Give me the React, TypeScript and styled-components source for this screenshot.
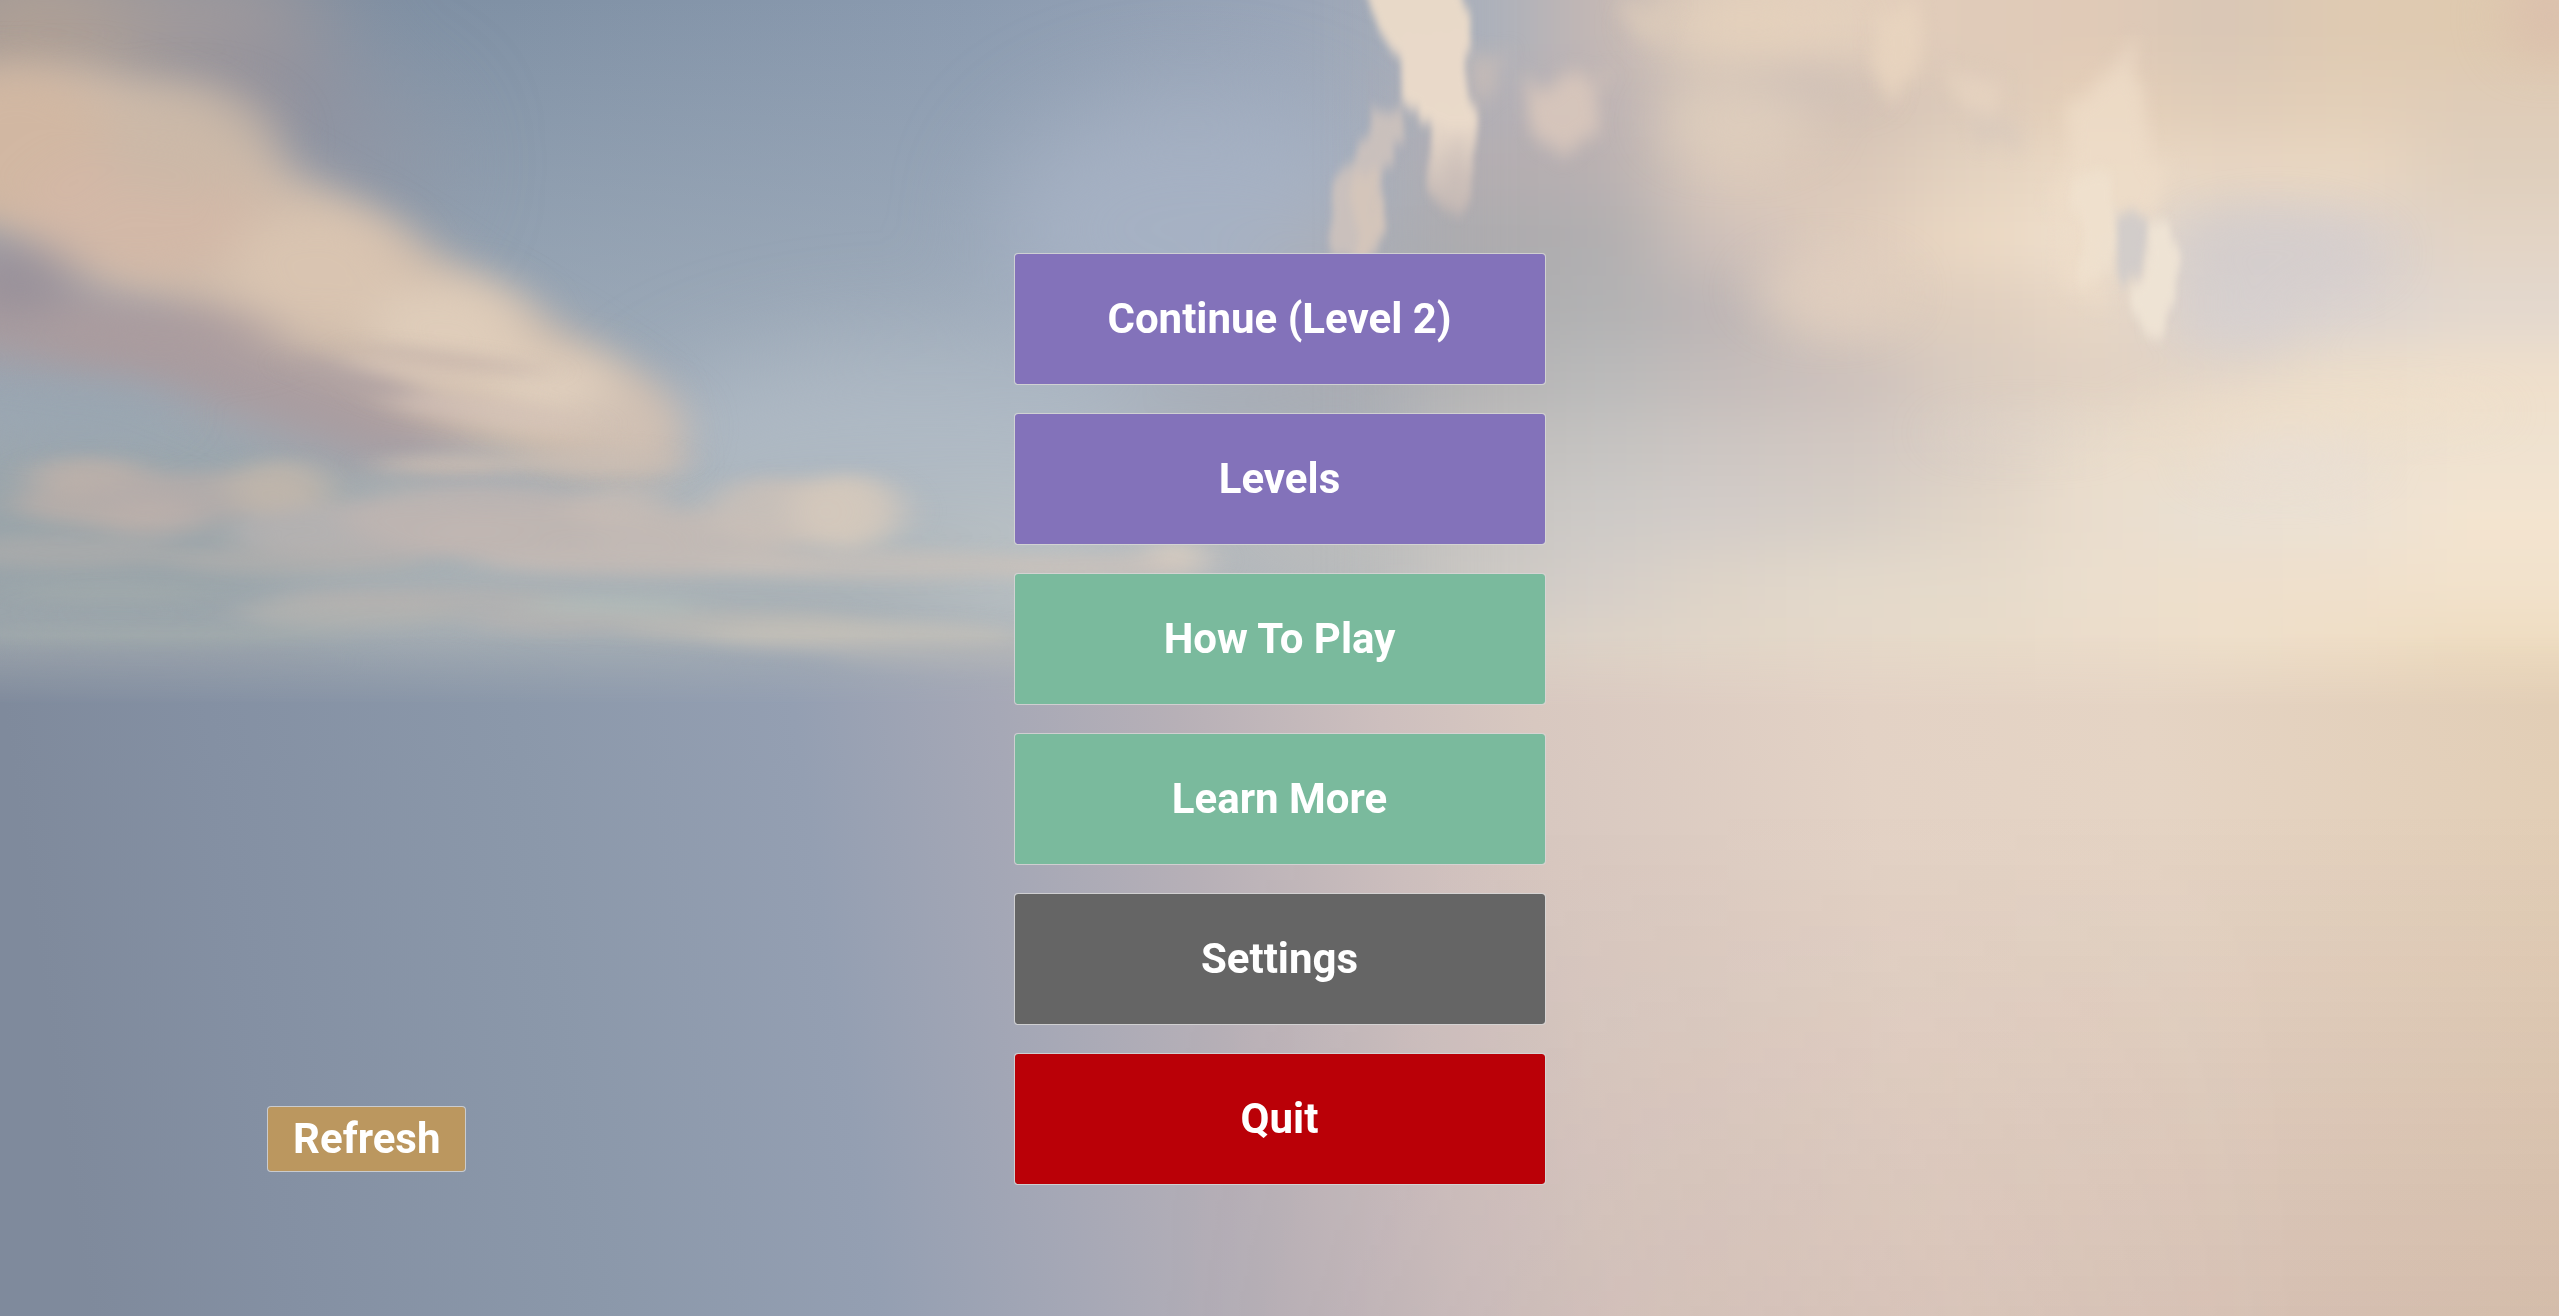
import React from "react";
import styled, { createGlobalStyle } from "styled-components";

const GlobalStyle = createGlobalStyle`
  body {
    margin: 0;
    background: #8f9bae;
  }
`;

const Screen = styled.main`
  position: relative;
  isolation: isolate;
  box-sizing: border-box;
  min-height: 100vh;
  padding-bottom: 131px;
  display: grid;
  grid-template-columns: 1fr 532px 1fr;
  align-items: end;
  overflow: hidden;
`;

const Backdrop = styled.svg`
  position: absolute;
  inset: 0;
  z-index: -1;
  width: 100%;
  height: 100%;
`;

const Corner = styled.div`
  display: flex;
  justify-content: center;
  padding: 0 280px 13px 0;
`;

const Menu = styled.nav`
  display: flex;
  flex-direction: column;
  gap: 28px;
`;

const GameButton = styled.button<{ $color: string }>`
  box-sizing: border-box;
  height: 132px;
  padding: 0 25px;
  border: 1px solid rgba(214, 214, 214, 0.85);
  border-radius: 4px;
  background: ${(p) => p.$color};
  background-clip: padding-box;
  color: #fff;
  font: 700 42px/48px Roboto, sans-serif;
  white-space: nowrap;
  cursor: pointer;
`;

const SmallButton = styled(GameButton)`
  height: 66px;
`;

const items = [
  { label: "Continue (Level 2)", color: "#8372ba" },
  { label: "Levels", color: "#8372ba" },
  { label: "How To Play", color: "#7aba9d" },
  { label: "Learn More", color: "#7aba9d" },
  { label: "Settings", color: "#656565" },
  { label: "Quit", color: "#ba0007" },
];

/* Overcast side of the sky: one colour per cell, blurred into each other. */
const CELL_W = 76;
const CELL_H = 42;
const FIELD_X = 866;
const field = [
  "aab0bb c3b7b4 e0cebc e4d0bd e0cbb9 e0cab7 d9c7b6 dfcab2 dfcab0",
  "b1afb6 bdb3b4 d6c6b8 d3c2b5 dccaba e6d0b9 dfccb8 e3cfb8 dfccb8",
  "b3adb0 b8b0b1 dccabb dac7b8 e4d3c0 eddbc6 e8d6c3 ead7c2 dfcfbd",
  "acabae b0aeb0 d0c1ba dfccbc ebd8c3 efe0ce d5cecb d9d0cd e3d4c5",
  "adadb0 b2b2b3 bdb5b5 ddccbd dfcebe e8d7c5 d5cfce dbd3d0 e3d8ce",
  "b4b3b4 bababa c4bcba ccc0bb daccc0 e1d1c2 e4d6c8 eddeca efdfcb",
  "bfbdbb c5c3c1 cdc6c2 d2c8c2 dbcfc5 eaddcc ecddca ecdfcf efe2d0",
  "c6c3c0 cdcac7 d3ccc8 d6cec6 e1d5c7 eaddcd e9e0d4 ece1d4 f3e4d0",
  "cbc8c4 d5cec8 ded4c8 e3d9cb e5dacb ebdecd eedfcc efe0cc f2e2cc",
  "d6cec5 ded3c7 e2d6c8 e5d8c9 e8dbc9 ebdcca eedfca efdec6 eedcc0",
].map((row) => row.split(" "));

/* cx, cy, rx, ry, colour, opacity */
type Puff = [number, number, number, number, string, number];

const hazePuffs: Puff[] = [
  [730, 140, 120, 80, "#a8b3c5", 0.8],
  [560, 280, 170, 70, "#b3bdc7", 0.7],
  [620, 350, 110, 40, "#c2c7c5", 0.75],
  [70, 330, 220, 60, "#98a4a7", 0.8],
  [380, 350, 220, 45, "#adb4b6", 0.8],
  [30, 20, 90, 60, "#b0a095", 1],
  [130, 15, 70, 45, "#a39b9b", 1],
  [160, 65, 60, 40, "#908f9b", 0.9],
  [220, 100, 50, 45, "#9296a3", 0.7],
  [850, 190, 70, 60, "#adadb1", 0.9],
  [790, 245, 110, 26, "#a9abb0", 0.9],
  [860, 335, 140, 30, "#c3c1bd", 0.9],
];

const softPuffs: Puff[] = [
  [10, 90, 60, 50, "#d2b7a0", 0.8],
  [85, 130, 70, 42, "#d3b8a6", 0.8],
  [115, 85, 55, 35, "#cbb8a6", 0.7],
  [195, 165, 55, 38, "#dbc6b2", 0.85],
  [275, 205, 50, 34, "#dfcdba", 0.95],
  [340, 238, 42, 22, "#e1d0bf", 0.9],
  [385, 262, 32, 24, "#d0c1b5", 0.9],
  [100, 205, 75, 16, "#aa9b9e", 0.8],
  [10, 172, 34, 22, "#968f98", 0.8],
  [45, 253, 60, 12, "#98a5b0", 0.8],
  [1095, 52, 50, 9, "#cbbdb7", 0.8],
  [1065, 75, 45, 26, "#dfcebd", 0.7],
  [1120, 178, 42, 24, "#e1cfbf", 0.7],
  [1070, 15, 60, 16, "#e5d1bc", 0.7],
  [1395, 155, 62, 26, "#d3cdcd", 0.6],
  [1375, 195, 34, 18, "#d7d1d0", 0.6],
  [1400, 282, 50, 14, "#e8dfd5", 0.8],
  [1420, 252, 110, 9, "#efdfcb", 0.7],
  [1240, 265, 50, 8, "#e0d3c8", 0.6],
  [1562, 10, 24, 30, "#dabfac", 0.9],
];

const smallClouds: Puff[] = [
  [55, 292, 38, 12, "#c3b3aa", 0.75],
  [65, 308, 56, 14, "#bcafa9", 0.8],
  [125, 303, 70, 14, "#b5adaa", 0.8],
  [172, 299, 32, 18, "#c2b6ab", 0.8],
  [95, 319, 34, 10, "#bdb1ab", 0.7],
  [230, 325, 90, 18, "#b8b3b1", 0.8],
  [290, 318, 80, 22, "#beb5b2", 0.85],
  [345, 328, 90, 18, "#c0b6b2", 0.85],
  [380, 310, 30, 12, "#cbbeb5", 0.7],
  [420, 330, 60, 18, "#c3bab5", 0.8],
  [475, 314, 42, 22, "#cac0b7", 0.85],
  [518, 313, 34, 23, "#d4c8bc", 0.95],
  [400, 344, 110, 9, "#c3bab5", 0.8],
  [540, 346, 110, 9, "#c8c0ba", 0.75],
  [40, 338, 70, 10, "#b1aeab", 0.6],
  [180, 343, 80, 9, "#b5b0ad", 0.6],
  [70, 363, 60, 6, "#a4abab", 0.6],
  [215, 375, 70, 10, "#b5b3af", 0.7],
  [260, 366, 90, 6, "#b9b3af", 0.6],
  [340, 379, 56, 9, "#b8b4b0", 0.7],
  [375, 371, 55, 6, "#b4beb9", 0.7],
  [100, 389, 120, 5, "#a5adab", 0.6],
  [460, 384, 80, 10, "#bbb9b4", 0.8],
  [530, 390, 100, 10, "#c3bfb9", 0.85],
  [590, 402, 80, 10, "#b6b8b6", 0.7],
  [90, 405, 110, 5, "#9ea4ab", 0.6],
  [720, 343, 18, 12, "#dccfc1", 0.9],
  [670, 348, 60, 9, "#c9c0ba", 0.8],
  [240, 297, 22, 9, "#aeb2b2", 0.5],
];

function Puffs({ list, filter }: { list: Puff[]; filter: string }) {
  return (
    <g filter={filter}>
      {list.map(([cx, cy, rx, ry, fill, opacity], i) => (
        <ellipse key={i} cx={cx} cy={cy} rx={rx} ry={ry} fill={fill} opacity={opacity} />
      ))}
    </g>
  );
}

/* Edge cells are stretched outwards so the blur never reaches bare canvas. */
function CloudField() {
  return (
    <g filter="url(#field)">
      {field.map((row, r) =>
        row.map((hex, c) => {
          const first = r === 0;
          const last = r === field.length - 1;
          const y = first ? -80 : r * CELL_H;
          const bottom = (r + 1) * CELL_H + (last ? 60 : 1);
          const right = c === row.length - 1 ? 80 : 1;
          return (
            <rect
              key={`${r}-${c}`}
              x={FIELD_X + c * CELL_W}
              y={y}
              width={CELL_W + right}
              height={bottom - y}
              fill={`#${hex}`}
            />
          );
        })
      )}
    </g>
  );
}

function Sky() {
  const area = { filterUnits: "userSpaceOnUse" as const, x: -150, y: -150, width: 1868, height: 1106 };
  return (
    <Backdrop viewBox="0 0 1568 806" preserveAspectRatio="none" aria-hidden="true" colorInterpolationFilters="sRGB">
      <defs>
        <linearGradient id="air" gradientUnits="userSpaceOnUse" x1="0" y1="0" x2="1568" y2="0">
          <stop offset="0" stopColor="#7e8c9e" />
          <stop offset="0.2" stopColor="#8091a5" />
          <stop offset="0.38" stopColor="#8b9bb0" />
          <stop offset="0.5" stopColor="#99a5b8" />
          <stop offset="0.58" stopColor="#aaaeb8" />
          <stop offset="0.72" stopColor="#dbc8b7" />
          <stop offset="1" stopColor="#dfcab3" />
        </linearGradient>
        <linearGradient id="airDown" x1="0" y1="0" x2="0" y2="1">
          <stop offset="0" stopColor="#b3bdc8" stopOpacity="0" />
          <stop offset="0.6" stopColor="#b0bac3" stopOpacity="0.65" />
          <stop offset="1" stopColor="#bcbdba" stopOpacity="0.5" />
        </linearGradient>
        <linearGradient id="ground" gradientUnits="userSpaceOnUse" x1="0" y1="420" x2="1530" y2="200">
          <stop offset="0" stopColor="#7f8a9c" />
          <stop offset="0.08" stopColor="#8490a3" />
          <stop offset="0.2" stopColor="#8b98aa" />
          <stop offset="0.31" stopColor="#949fb2" />
          <stop offset="0.39" stopColor="#a6a8b6" />
          <stop offset="0.46" stopColor="#b7b0b7" />
          <stop offset="0.54" stopColor="#cdbfbe" />
          <stop offset="0.6" stopColor="#d8c8c0" />
          <stop offset="0.73" stopColor="#e3d2c5" />
          <stop offset="0.84" stopColor="#e5d4c4" />
          <stop offset="1" stopColor="#e2ceb6" />
        </linearGradient>
        <linearGradient id="dusk" x1="0" y1="0" x2="0" y2="1">
          <stop offset="0.2" stopColor="#74404a" stopOpacity="0" />
          <stop offset="1" stopColor="#74404a" stopOpacity="0.13" />
        </linearGradient>
        <linearGradient id="duskSide" x1="0" y1="0" x2="1" y2="0">
          <stop offset="0.45" stopColor="#000" />
          <stop offset="0.9" stopColor="#fff" />
        </linearGradient>
        <linearGradient id="horizonFade" x1="0" y1="0" x2="0" y2="1">
          <stop offset="0" stopColor="#000" />
          <stop offset="0.1" stopColor="#fff" />
        </linearGradient>
        <linearGradient id="column" x1="0" y1="0" x2="0" y2="1">
          <stop offset="0" stopColor="#e8d9c8" />
          <stop offset="0.65" stopColor="#eadaca" />
          <stop offset="1" stopColor="#cbbbb4" stopOpacity="0.6" />
        </linearGradient>
        <mask id="groundMask">
          <rect y="390" width="1568" height="416" fill="url(#horizonFade)" />
        </mask>
        <mask id="duskMask">
          <rect width="1568" height="806" fill="url(#duskSide)" />
        </mask>
        <filter id="haze" {...area}>
          <feGaussianBlur stdDeviation="30" />
        </filter>
        <filter id="field" {...area}>
          <feGaussianBlur stdDeviation="26 16" />
        </filter>
        <filter id="soft" {...area}>
          <feGaussianBlur stdDeviation="16 12" />
        </filter>
        <filter id="edge" {...area}>
          <feGaussianBlur stdDeviation="13" />
        </filter>
        <filter id="small" {...area}>
          <feGaussianBlur stdDeviation="12 5" />
        </filter>
        <filter id="wisp" filterUnits="userSpaceOnUse" x="700" y="-60" width="800" height="400">
          <feTurbulence type="fractalNoise" baseFrequency="0.07 0.03" numOctaves="3" seed="7" result="n" />
          <feDisplacementMap in="SourceGraphic" in2="n" scale="22" xChannelSelector="R" yChannelSelector="G" />
          <feGaussianBlur stdDeviation="2 4" />
        </filter>
        <filter id="faintWisp" filterUnits="userSpaceOnUse" x="700" y="-60" width="800" height="400">
          <feTurbulence type="fractalNoise" baseFrequency="0.05 0.03" numOctaves="3" seed="3" result="n" />
          <feDisplacementMap in="SourceGraphic" in2="n" scale="30" xChannelSelector="R" yChannelSelector="G" />
          <feGaussianBlur stdDeviation="5 6" />
        </filter>
      </defs>

      <rect width="1568" height="806" fill="url(#air)" />
      <rect width="1568" height="430" fill="url(#airDown)" />
      <Puffs list={hazePuffs} filter="url(#haze)" />
      <CloudField />

      <g filter="url(#edge)">
        <path d="M-40 150 L0 155 L90 190 L190 205 L300 230 L330 275 L230 284 L150 258 L80 230 L-40 214Z" fill="#aa9da0" />
        <path d="M-40 46 L60 42 L125 62 L178 102 L235 134 L295 172 L352 206 L404 240 L416 290 L345 291 L290 272 L215 230 L150 205 L70 174 L0 134 L-40 125Z" fill="#cebbab" />
      </g>
      <Puffs list={softPuffs} filter="url(#soft)" />
      <g filter="url(#small)">
        <ellipse cx="275" cy="220" rx="60" ry="4" transform="rotate(8 275 220)" fill="#b8a5a1" opacity="0.6" />
        <ellipse cx="235" cy="238" rx="55" ry="7" transform="rotate(18 235 238)" fill="#ad9fa1" opacity="0.8" />
        <ellipse cx="250" cy="227" rx="42" ry="5" transform="rotate(8 250 227)" fill="#d4c2b4" opacity="0.8" />
        <ellipse cx="300" cy="252" rx="60" ry="8" transform="rotate(8 300 252)" fill="#d3c2b7" opacity="0.8" />
        <ellipse cx="275" cy="285" rx="46" ry="6" fill="#cbbcb1" opacity="0.9" />
        <ellipse cx="365" cy="282" rx="50" ry="8" fill="#cbbdb3" opacity="0.7" />
      </g>
      <Puffs list={smallClouds} filter="url(#small)" />

      <g filter="url(#faintWisp)">
        <path d="M900 30 L922 34 L914 62 L902 52Z" fill="#cbbdb7" opacity="0.7" />
        <path d="M930 46 L982 50 L974 74 L954 96 L938 74Z" fill="#d8c7bb" opacity="0.9" />
        <path d="M985 0 L1030 4 L1022 30 L1000 22Z" fill="#dccab9" opacity="0.7" />
        <path d="M1150 10 L1178 6 L1168 60 L1146 46Z" fill="#e8d4bf" opacity="0.9" />
        <path d="M1196 46 L1226 50 L1222 74 L1202 68Z" fill="#e6d3c0" opacity="0.9" />
        <path d="M1205 74 L1240 78 L1236 92 L1212 90Z" fill="#d6c8bc" opacity="0.7" />
        <path d="M1268 60 L1310 30 L1312 100 L1336 104 L1322 130 L1290 150 L1284 186 L1262 170Z" fill="#eedcc8" opacity="0.8" />
      </g>
      <g filter="url(#wisp)">
        <path d="M828 -24 L895 -24 L899 30 L903 62 L905 92 L902 122 L888 128 L878 110 L872 78 L862 60 L857 36 L843 14Z" fill="url(#column)" />
        <path d="M838 66 L860 66 L862 82 L854 98 L846 122 L842 158 L816 158 L818 106 L832 98Z" fill="#cdc2bd" opacity="0.9" />
        <path d="M832 108 L846 104 L842 150 L826 158Z" fill="#d8c7b9" opacity="0.7" />
        <path d="M1296 132 L1318 134 L1312 166 L1296 180Z" fill="#cfcbca" opacity="0.9" />
        <path d="M1272 106 L1300 104 L1298 132 L1290 168 L1274 176Z" fill="#f0e2d0" opacity="0.6" />
        <path d="M1318 138 L1334 136 L1337 186 L1318 206 L1302 190 L1314 168Z" fill="#f0e4d5" opacity="0.9" />
      </g>

      <rect y="390" width="1568" height="416" fill="url(#ground)" mask="url(#groundMask)" />
      <rect y="420" width="1568" height="386" fill="url(#dusk)" mask="url(#duskMask)" />
    </Backdrop>
  );
}

export default function App() {
  return (
    <>
      <GlobalStyle />
      <Screen>
        <Sky />
        <Corner>
          <SmallButton type="button" $color="#bb975f">Refresh</SmallButton>
        </Corner>
        <Menu aria-label="Main menu">
          {items.map((item) => (
            <GameButton key={item.label} type="button" $color={item.color}>
              {item.label}
            </GameButton>
          ))}
        </Menu>
      </Screen>
    </>
  );
}
